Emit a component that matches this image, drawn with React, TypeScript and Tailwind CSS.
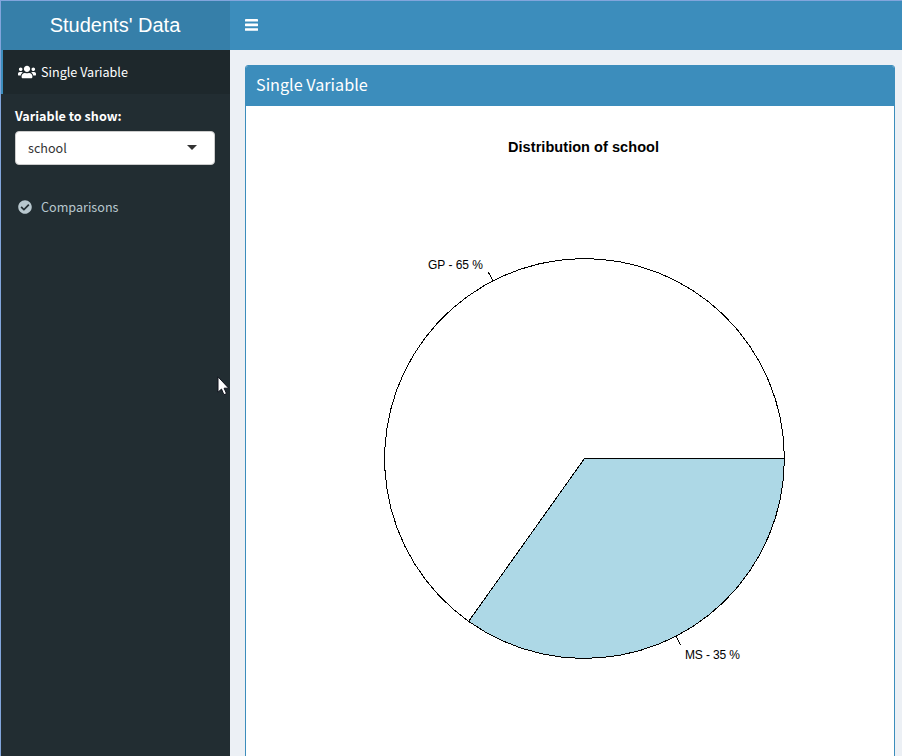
import { FaCheckCircle, FaUsers } from "react-icons/fa";

const CX = 339.5;
const CY = 352.5;
const R = 199.9;

function point(fraction: number, radius = R) {
  const a = fraction * 2 * Math.PI;
  return [CX + radius * Math.cos(a), CY - radius * Math.sin(a)];
}

function arc(from: number, to: number) {
  const steps = Math.floor(64 * (to - from));
  return Array.from({ length: steps + 1 }, (_, i) =>
    point(from + ((to - from) * i) / steps).map((v) => v.toFixed(2)).join(","),
  ).join(" ");
}

function Tick({ at }: { at: number }) {
  const [x1, y1] = point(at);
  const [x2, y2] = point(at, R * 1.05);
  return <line x1={x1} y1={y1} x2={x2} y2={y2} stroke="black" />;
}

function PieChart() {
  return (
    <svg
      width="648"
      height="670"
      viewBox="1 0 648 670"
      className="block shrink-0 font-['Liberation_Sans',sans-serif]"
    >
      <g shapeRendering="crispEdges">
        <polygon points={`${CX},${CY} ${arc(0, 0.6516)}`} fill="white" stroke="black" />
        <polygon points={`${CX},${CY} ${arc(0.6516, 1)}`} fill="#add8e6" stroke="black" />
        <Tick at={0.3258} />
        <Tick at={0.8258} />
      </g>
      <text x="263" y="46" textLength="151" className="text-[14.5px] font-bold">
        Distribution of school
      </text>
      <text x="183" y="163" textLength="55" className="text-[12px]">
        GP - 65 %
      </text>
      <text x="440" y="553" textLength="55" className="text-[12px]">
        MS - 35 %
      </text>
    </svg>
  );
}

function Sidebar() {
  return (
    <aside className="flex w-[229px] shrink-0 flex-col bg-[#222d32] text-[12.6px] text-white">
      <a className="flex h-11 items-center border-l-2 border-[#3c8dbc] bg-[#1e282c] pl-[15px]">
        <FaUsers className="mr-[5px] h-[18px] w-[18px]" />
        <span>Single Variable</span>
      </a>
      <div className="px-[14px] pt-3">
        <label className="block h-5 leading-5 font-bold">Variable to show:</label>
        <div className="mt-[5px] flex h-[34px] w-[200px] items-center justify-between rounded border border-[#ccc] bg-white pr-[17px] pl-3 text-[#333]">
          <span>school</span>
          <span className="mb-px h-0 w-0 border-x-5 border-t-5 border-x-transparent border-t-[#333]" />
        </div>
      </div>
      <a className="mt-5 flex h-11 items-center pl-[17px] text-[#b8c7ce]">
        <FaCheckCircle className="mr-[9px] h-[14px] w-[14px]" />
        <span>Comparisons</span>
      </a>
    </aside>
  );
}

function Cursor() {
  return (
    <svg className="absolute top-[375px] left-[216px]" width="13" height="21" viewBox="0 0 13 21">
      <path
        d="M1 .8v15.4l3.5-3.1 2.4 5.6 2.6-1.1-2.4-5.4h4.6z"
        fill="white"
        stroke="#10131d"
        strokeWidth="1"
      />
    </svg>
  );
}

export default function App() {
  return (
    <div className="relative flex h-[756px] w-[902px] flex-col overflow-hidden border-t border-l border-[#82a5dc] bg-[#ecf0f5] font-['Noto_Sans_CJK_SC',sans-serif]">
      <header className="flex h-[49px] shrink-0 bg-[#3c8dbc] text-white">
        <div className="flex w-[229px] items-center justify-center bg-[#367fa9] pr-px pb-px font-['Liberation_Sans',sans-serif] text-[20px]">
          Students' Data
        </div>
        <button className="flex items-center pb-px pl-[15px]" aria-label="Toggle navigation">
          <svg width="13" height="12" viewBox="0 0 13 12" fill="white">
            <rect width="13" height="2.6" rx="0.4" />
            <rect y="4.6" width="13" height="2.6" rx="0.4" />
            <rect y="9.2" width="13" height="2.6" rx="0.4" />
          </svg>
        </button>
      </header>
      <div className="flex min-h-0 flex-1">
        <Sidebar />
        <main className="min-w-0 flex-1 pt-[15px] pl-[15px]">
          <section className="w-[650px] overflow-hidden rounded-[3px] border border-[#3c8dbc] bg-white">
            <h3 className="flex h-10 items-center bg-[#3c8dbc] pb-[3px] pl-[10px] text-[16.2px] text-white">
              Single Variable
            </h3>
            <PieChart />
          </section>
        </main>
      </div>
      <Cursor />
    </div>
  );
}
